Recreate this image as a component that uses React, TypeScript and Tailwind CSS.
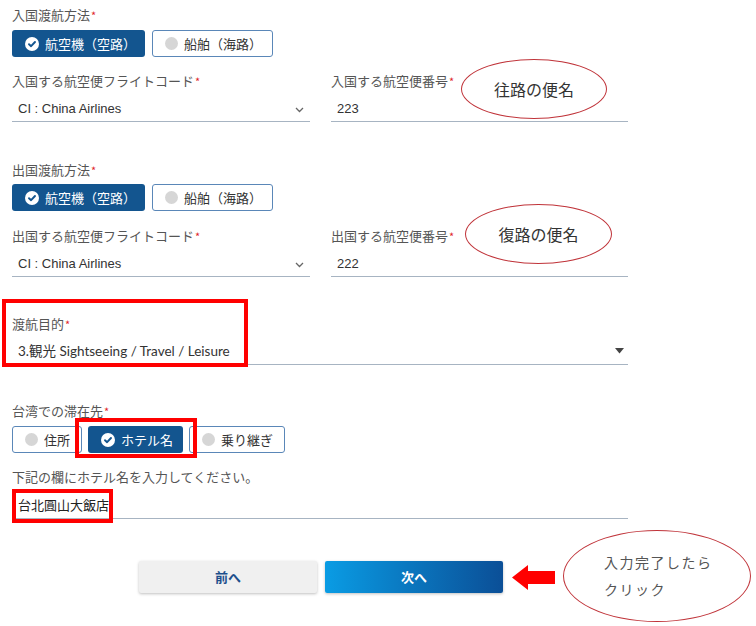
import React from "react";

const JP = '"Noto Sans CJK JP", "Noto Sans", sans-serif';

function Label({ children }: { children: React.ReactNode }) {
  return (
    <div className="h-[18px] leading-[18px] text-[13px] text-[#555]">
      {children}
      <span className="text-[#e0262b] text-[11px] align-top ml-[1px]">*</span>
    </div>
  );
}

function CheckCircle() {
  return (
    <svg width="14" height="14" viewBox="0 0 14 14" className="shrink-0">
      <circle cx="7" cy="7" r="7" fill="#ffffff" />
      <path d="M4 7.2 L6.1 9.2 L10 5" fill="none" stroke="#13558f" strokeWidth="1.9" strokeLinecap="round" strokeLinejoin="round" />
    </svg>
  );
}

function Dot() {
  return <span className="w-[13px] h-[13px] rounded-full bg-[#d6d6d6] shrink-0" />;
}

function ActiveBtn({ w, children }: { w: string; children: React.ReactNode }) {
  return (
    <div className={`${w} h-[27px] rounded-[3px] bg-[#13558f] text-white text-[13px] flex items-center pl-[13px] gap-[6px]`}>
      <CheckCircle />
      <span className="leading-none">{children}</span>
    </div>
  );
}

function InactiveBtn({ w, children }: { w: string; children: React.ReactNode }) {
  return (
    <div className={`${w} h-[27px] rounded-[3px] border border-[#5a87b8] bg-white text-[#333] text-[13px] flex items-center pl-[12px] gap-[6px]`}>
      <Dot />
      <span className="leading-none">{children}</span>
    </div>
  );
}

function Chevron() {
  return (
    <svg width="9" height="6" viewBox="0 0 9 6">
      <path d="M1 1 L4.5 4.5 L8 1" fill="none" stroke="#666" strokeWidth="1.3" />
    </svg>
  );
}

const LS = { fontFamily: '"Liberation Sans", Arial, sans-serif' };

function FlightRow({ codeLabel, numLabel, num }: { codeLabel: string; numLabel: string; num: string }) {
  return (
    <div className="grid grid-cols-[298px_297px] gap-x-[21px]">
      <div>
        <Label>{codeLabel}</Label>
        <div className="h-[32px] border-b border-[#a7b4c2] pt-[10px] pl-[6px] pr-[6px] flex justify-between items-start">
          <span className="block h-[18px] leading-[18px] text-[13px] text-[#333]" style={LS}>
            CI : China Airlines
          </span>
          <span className="pt-[7px] flex"><Chevron /></span>
        </div>
      </div>
      <div>
        <Label>{numLabel}</Label>
        <div className="h-[32px] border-b border-[#a7b4c2] pt-[10px] pl-[6px] flex items-start">
          <span className="block h-[18px] leading-[18px] text-[13px] text-[#333]" style={LS}>
            {num}
          </span>
        </div>
      </div>
    </div>
  );
}

export default function App() {
  return (
    <div className="relative w-[756px] h-[626px] bg-white overflow-hidden" style={{ fontFamily: JP }}>
      <div className="pl-[12px] w-[628px]">
        {/* Section 1 */}
        <div className="pt-[6px]">
          <Label>入国渡航方法</Label>
          <div className="mt-[6px] flex gap-[7px]">
            <ActiveBtn w="w-[133px]">航空機（空路）</ActiveBtn>
            <InactiveBtn w="w-[121px]">船舶（海路）</InactiveBtn>
          </div>
          <div className="mt-[15px]">
            <FlightRow codeLabel="入国する航空便フライトコード" numLabel="入国する航空便番号" num="223" />
          </div>
        </div>

        {/* Section 2 */}
        <div className="mt-[39px]">
          <Label>出国渡航方法</Label>
          <div className="mt-[5px] flex gap-[7px]">
            <ActiveBtn w="w-[133px]">航空機（空路）</ActiveBtn>
            <InactiveBtn w="w-[121px]">船舶（海路）</InactiveBtn>
          </div>
          <div className="mt-[16px]">
            <FlightRow codeLabel="出国する航空便フライトコード" numLabel="出国する航空便番号" num="222" />
          </div>
        </div>

        {/* Purpose */}
        <div className="mt-[38px]">
          <Label>渡航目的</Label>
          <div className="h-[32px] border-b border-[#a7b4c2] pt-[9px] pl-[6px] pr-[4px] flex justify-between items-start">
            <span className="block h-[18px] leading-[18px] text-[13.5px] text-[#333]" style={{ fontFamily: 'Lato, "Noto Sans CJK JP", sans-serif' }}>
              3.観光 Sightseeing / Travel / Leisure
            </span>
            <svg width="9" height="6" viewBox="0 0 9 6" className="mt-[6px]">
              <path d="M0 0 L9 0 L4.5 5.5 Z" fill="#444" />
            </svg>
          </div>
        </div>

        {/* Stay */}
        <div className="mt-[37px]">
          <Label>台湾での滞在先</Label>
          <div className="mt-[6px] flex gap-[6px]">
            <InactiveBtn w="w-[70px]">住所</InactiveBtn>
            <ActiveBtn w="w-[95px]">ホテル名</ActiveBtn>
            <InactiveBtn w="w-[96px]">乗り継ぎ</InactiveBtn>
          </div>
          <div className="mt-[15px] h-[18px] leading-[18px] text-[13px] text-[#555]">
            下記の欄にホテル名を入力してください。
          </div>
          <div className="h-[33px] border-b border-[#a7b4c2] pt-[10px] pl-[6px] flex items-start">
            <span className="block h-[18px] leading-[18px] text-[13px] text-[#222]">台北圓山大飯店</span>
          </div>
        </div>

        {/* Nav buttons */}
        <div className="mt-[42px] ml-[127px] flex gap-[8px]">
          <div className="w-[178px] h-[32px] rounded-[2px] bg-[#f0f0f0] shadow-[0_1px_3px_rgba(0,0,0,0.25)] flex items-center justify-center text-[13px] font-bold text-[#1d4f8c]">
            前へ
          </div>
          <div className="w-[178px] h-[32px] rounded-[2px] bg-gradient-to-r from-[#0a9ce4] to-[#0b4f97] shadow-[0_1px_3px_rgba(0,0,0,0.25)] flex items-center justify-center text-[13px] font-bold text-white">
            次へ
          </div>
        </div>
      </div>

      {/* Annotations */}
      <div className="absolute left-[461px] top-[59px] w-[146px] h-[60px] rounded-[50%] border border-[#c0343a] bg-white flex items-center justify-center text-[16px] text-[#333]">
        往路の便名
      </div>
      <div className="absolute left-[465px] top-[204px] w-[147px] h-[60px] rounded-[50%] border border-[#c0343a] bg-white flex items-center justify-center text-[16px] text-[#333]">
        復路の便名
      </div>
      <div className="absolute left-[563px] top-[530px] w-[188px] h-[92px] rounded-[50%] border border-[#c0343a] bg-white pl-[40px] pt-[18px] text-[14px] text-[#555] tracking-[1.5px] leading-[27px]">
        <div>入力完了したら</div>
        <div>クリック</div>
      </div>
      <svg className="absolute left-[512px] top-[565px]" width="43" height="25" viewBox="0 0 43 25">
        <path d="M0 12.5 L16 0 L16 6 L43 6 L43 19 L16 19 L16 25 Z" fill="#ff0000" />
      </svg>

      <div className="absolute left-[2px] top-[299px] w-[246px] h-[68px] border-[4px] border-[#ff0000]" />
      <div className="absolute left-[75px] top-[418px] w-[122px] h-[40px] border-[4px] border-[#ff0000]" />
      <div className="absolute left-[12px] top-[489px] w-[101px] h-[34px] border-[4px] border-[#ff0000]" />
    </div>
  );
}
